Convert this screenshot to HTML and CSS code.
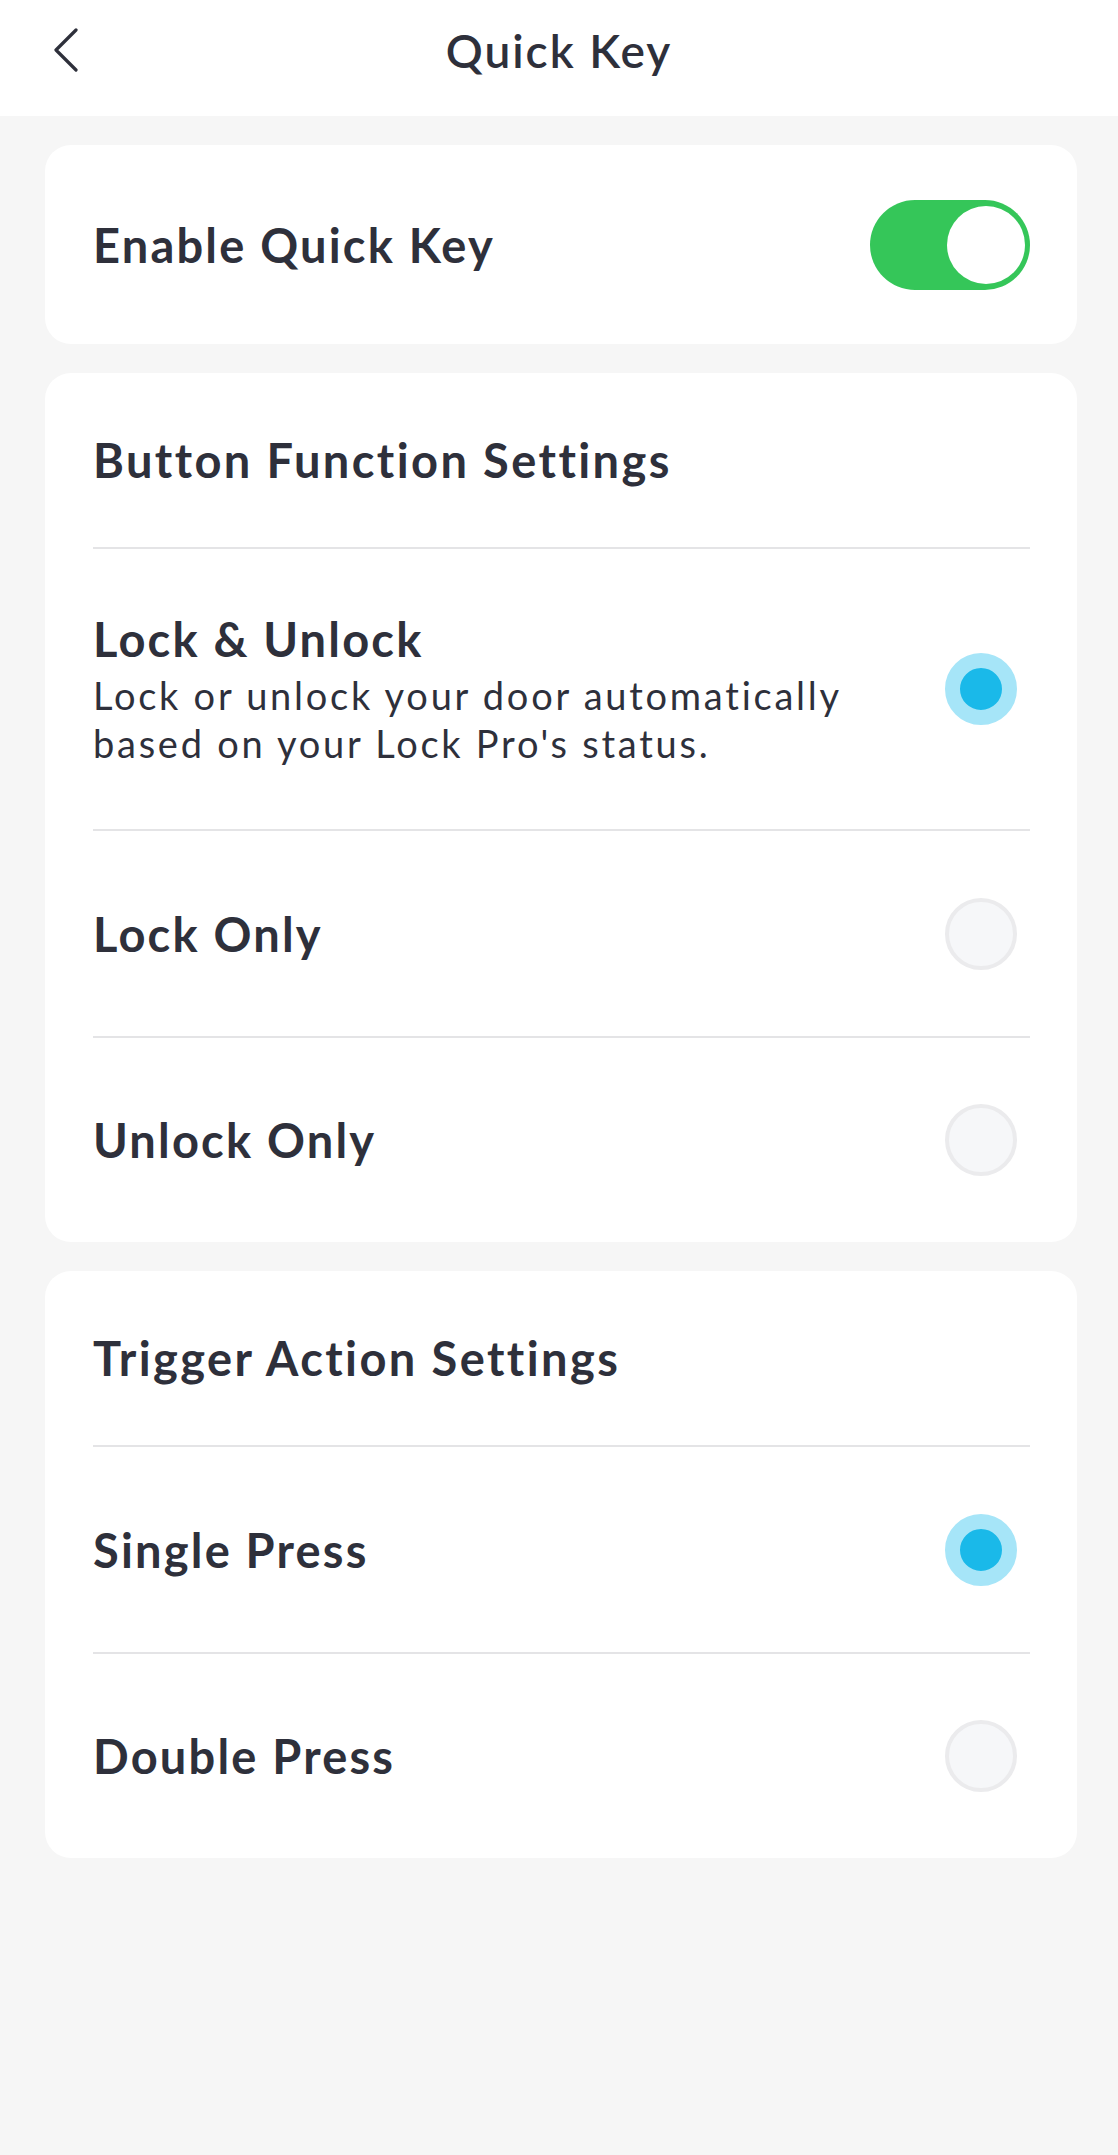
FILE: index.html
```html
<!DOCTYPE html>
<html lang="en">

<head>
    <meta charset="UTF-8">
    <meta name="viewport" content="width=device-width, initial-scale=1.0">
    <title>Quick Key</title>
    <link rel="stylesheet" href="styles.css">
</head>

<body>
    <header class="top-bar">
        <button class="back-btn" aria-label="Back">
            <svg width="26" height="44" viewBox="0 0 26 44">
                <path d="M23 2 L3 22 L23 42" fill="none" stroke="#2e303b" stroke-width="3.2" stroke-linecap="round" stroke-linejoin="round" />
            </svg>
        </button>
        <h1>Quick Key</h1>
        <span></span>
    </header>

    <main>
        <!-- Enable switch -->
        <div class="card">
            <div class="switch-row">
                <span class="item-title">Enable Quick Key</span>
                <div class="toggle on">
                    <div class="knob"></div>
                </div>
            </div>
        </div>

        <!-- Button function -->
        <div class="card">
            <div class="section-title">Button Function Settings</div>

            <div class="option tall">
                <div class="option-text">
                    <div class="item-title">Lock &amp; Unlock</div>
                    <p class="item-desc">Lock or unlock your door automatically<br>based on your Lock Pro's status.</p>
                </div>
                <div class="radio checked"></div>
            </div>

            <div class="option">
                <div class="item-title">Lock Only</div>
                <div class="radio"></div>
            </div>

            <div class="option">
                <div class="item-title">Unlock Only</div>
                <div class="radio"></div>
            </div>
        </div>

        <!-- Trigger action -->
        <div class="card">
            <div class="section-title">Trigger Action Settings</div>

            <div class="option">
                <div class="item-title">Single Press</div>
                <div class="radio checked"></div>
            </div>

            <div class="option">
                <div class="item-title">Double Press</div>
                <div class="radio"></div>
            </div>
        </div>
    </main>
</body>

</html>
```

FILE: styles.css
```css
body {
    font-family: 'Lato', 'Liberation Sans', sans-serif;
    margin: 0;
    padding: 0;
    background-color: #f6f6f6;
    color: #2e303b;
    min-height: 2155px;
}

.top-bar {
    height: 116px;
    box-sizing: border-box;
    padding-bottom: 16px;
    background-color: #ffffff;
    display: grid;
    grid-template-columns: 1fr auto 1fr;
    align-items: center;
}

.top-bar h1 {
    margin: 0;
    font-size: 46px;
    font-weight: 600;
    letter-spacing: 2px;
}

.back-btn {
    justify-self: start;
    margin-left: 53px;
    padding: 0;
    border: none;
    background: none;
    display: flex;
    cursor: pointer;
}

main {
    padding: 29px 41px 0 45px;
    display: flex;
    flex-direction: column;
    gap: 29px;
}

.card {
    background-color: #ffffff;
    border-radius: 26px;
    padding: 0 47px 0 48px;
}

.switch-row {
    height: 199px;
    display: flex;
    align-items: center;
    justify-content: space-between;
}

.item-title {
    font-size: 47px;
    font-weight: 700;
    letter-spacing: 2.2px;
}

.section-title {
    height: 174px;
    display: flex;
    align-items: center;
    font-size: 47px;
    font-weight: 700;
    letter-spacing: 2.4px;
    border-bottom: 2px solid #e4e4e6;
}

.option {
    height: 205px;
    display: flex;
    align-items: center;
    justify-content: space-between;
    border-bottom: 2px solid #e4e4e6;
}

.option:last-child {
    border-bottom: none;
    height: 204px;
}

.option.tall {
    height: 280px;
}

.item-desc {
    margin: 4px 0 0;
    font-size: 38px;
    line-height: 48px;
    font-weight: 400;
    letter-spacing: 2.75px;
}

/* toggle */
.toggle {
    width: 160px;
    height: 90px;
    border-radius: 45px;
    background-color: #35c659;
    display: flex;
    align-items: center;
    justify-content: flex-end;
    padding: 0 5px;
    box-sizing: border-box;
}

.knob {
    width: 78px;
    height: 78px;
    border-radius: 50%;
    background-color: #ffffff;
}

/* radio */
.radio {
    width: 72px;
    height: 72px;
    margin-right: 13px;
    border-radius: 50%;
    box-sizing: border-box;
    border: 4px solid #ebebed;
    background-color: #f6f7f9;
    flex-shrink: 0;
}

.radio.checked {
    border: 15px solid #a6e5f8;
    background-color: #1ab9e9;
}
```
